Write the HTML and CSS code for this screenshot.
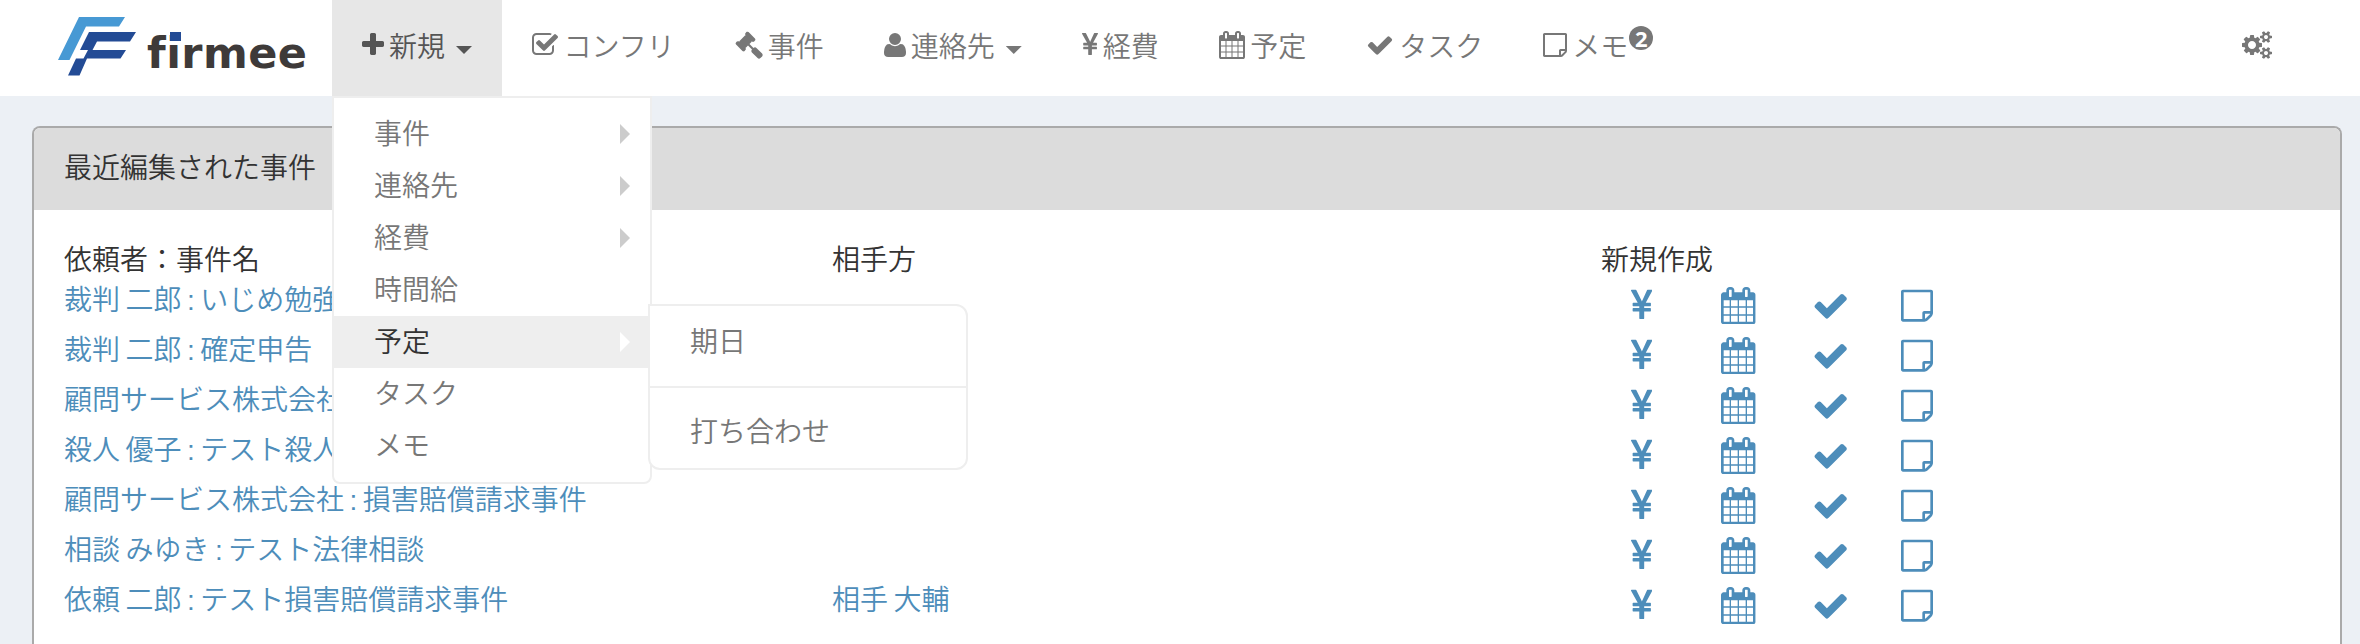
FILE: index.html
```html
<!DOCTYPE html>
<html lang="ja">
<head>
<meta charset="utf-8">
<title>firmee</title>
<link rel="stylesheet" href="styles.css">
</head>
<body>
<svg class="sprite" aria-hidden="true">
  <symbol id="plus" viewBox="192 0 1408 1792"><path d="M1600 736v192q0 40-28 68t-68 28h-416v416q0 40-28 68t-68 28h-192q-40 0-68-28t-28-68v-416h-416q-40 0-68-28t-28-68v-192q0-40 28-68t68-28h416v-416q0-40 28-68t68-28h192q40 0 68 28t28 68v416h416q40 0 68 28t28 68z"/></symbol>
  <symbol id="check-square" viewBox="64 0 1664 1792"><path d="M1472 930v318q0 119-84.5 203.5t-203.5 84.5h-832q-119 0-203.5-84.5t-84.5-203.5v-832q0-119 84.5-203.5t203.5-84.5h832q63 0 117 25 15 7 18 23 3 17-9 29l-49 49q-10 10-23 10-3 0-9-2-23-6-45-6h-832q-66 0-113 47t-47 113v832q0 66 47 113t113 47h832q66 0 113-47t47-113v-254q0-13 9-22l64-64q10-10 23-10 6 0 12 3 20 8 20 29zm231-489l-814 814q-24 24-57 24t-57-24l-430-430q-24-24-24-57t24-57l110-110q24-24 57-24t57 24l263 263 647-647q24-24 57-24t57 24l110 110q24 24 24 57t-24 57z"/></symbol>
  <symbol id="gavel" viewBox="0 0 1792 1792"><path d="M1771 1536q0 53-37 90l-107 108q-39 37-91 37-53 0-90-37l-363-364q-38-36-38-90 0-53 43-96l-256-256-126 126q-14 14-34 14t-34-14q2 2 12.5 12t12.5 13 10 11.5 10 13.5 6 13.5 5.5 16.5 1.5 18q0 38-28 68-3 3-16.5 18t-19 20.5-18.5 16.5-22 15.5-22 9-26 4.5q-40 0-68-28l-408-408q-28-28-28-68 0-13 4.5-26t9-22 15.5-22 16.5-18.5 20.5-19 18-16.5q30-28 68-28 10 0 18 1.5t16.5 5.5 13.5 6 13.5 10 11.5 10 13 12.5 12 12.5q-14-14-14-34t14-34l348-348q14-14 34-14t34 14q-2-2-12.5-12t-12.5-13-10-11.5-10-13.5-6-13.5-5.5-16.5-1.5-18q0-38 28-68 3-3 16.5-18t19-20.5 18.5-16.5 22-15.5 22-9 26-4.5q40 0 68 28l408 408q28 28 28 68 0 13-4.5 26t-9 22-15.5 22-16.5 18.5-20.5 19-18 16.5q-30 28-68 28-10 0-18-1.5t-16.5-5.5-13.5-6-13.5-10-11.5-10-13-12.5-12-12.5q14 14 14 34t-14 34l-126 126 256 256q43-43 96-43 52 0 91 37l363 363q37 39 37 91z"/></symbol>
  <symbol id="user" viewBox="192 0 1408 1792"><path d="M1600 1405q0 120-73 189.5t-194 69.5h-874q-121 0-194-69.5t-73-189.5q0-53 3.5-103.5t14-109 26.5-108.5 43-97.5 62-81 85.5-53.5 111.5-20q9 0 42 21.5t74.5 48 108 48 133.5 21.5 133.5-21.5 108-48 74.5-48 42-21.5q61 0 111.5 20t85.5 53.5 62 81 43 97.5 26.5 108.5 14 109 3.5 103.5zm-320-893q0 159-112.5 271.5t-271.5 112.5-271.5-112.5-112.5-271.5 112.5-271.5 271.5-112.5 271.5 112.5 112.5 271.5z"/></symbol>
  <symbol id="yen" viewBox="384 0 1024 1792"><path d="M985.5 1536h-172q-13 0-22.5-9t-9.5-23v-330h-288q-13 0-22.5-9t-9.5-23v-103q0-13 9.5-22.5t22.5-9.5h288v-85h-288q-13 0-22.5-9t-9.5-23v-104q0-13 9.5-22.5t22.5-9.5h214l-321-578q-8-16 0-32 10-16 28-16h194q19 0 29 18l215 425q19 38 56 125 10-24 30.5-68t27.5-61l191-420q8-19 29-19h191q17 0 27 16 9 14 1 31l-313 579h215q13 0 22.5 9.5t9.5 22.5v104q0 14-9.5 23t-22.5 9h-290v85h290q13 0 22.5 9.5t9.5 22.5v103q0 14-9.5 23t-22.5 9h-290v330q0 13-9.5 22.5t-22.5 9.5z"/></symbol>
  <symbol id="calendar" viewBox="64 0 1664 1792"><path d="M192 1664h288v-288h-288v288zm352 0h320v-288h-320v288zm-352-352h288v-320h-288v320zm352 0h320v-320h-320v320zm-352-384h288v-288h-288v288zm736 736h320v-288h-320v288zm-384-736h320v-288h-320v288zm768 736h288v-288h-288v288zm-384-352h320v-320h-320v320zm-352-864v-288q0-13-9.5-22.5t-22.5-9.5h-64q-13 0-22.5 9.5t-9.5 22.5v288q0 13 9.5 22.5t22.5 9.5h64q13 0 22.5-9.5t9.5-22.5zm736 864h288v-320h-288v320zm-384-384h320v-288h-320v288zm384 0h288v-288h-288v288zm32-480v-288q0-13-9.5-22.5t-22.5-9.5h-64q-13 0-22.5 9.5t-9.5 22.5v288q0 13 9.5 22.5t22.5 9.5h64q13 0 22.5-9.5t9.5-22.5zm384-64v1280q0 52-38 90t-90 38h-1408q-52 0-90-38t-38-90v-1280q0-52 38-90t90-38h128v-96q0-66 47-113t113-47h64q66 0 113 47t47 113v96h384v-96q0-66 47-113t113-47h64q66 0 113 47t47 113v96h128q52 0 90 38t38 90z"/></symbol>
  <symbol id="check" viewBox="0 0 1792 1792"><path d="M1671 566q0 40-28 68l-724 724-136 136q-28 28-68 28t-68-28l-136-136-362-362q-28-28-28-68t28-68l136-136q28-28 68-28t68 28l294 295 656-657q28-28 68-28t68 28l136 136q28 28 28 68z"/></symbol>
  <symbol id="note" viewBox="0 0 1536 1792"><path d="M1400 1280h-248v248q29-10 41-22l185-185q12-12 22-41zm-280-128h288v-896h-1280v1280h896v-288q0-40 28-68t68-28zm416-928v1024q0 40-20 88t-48 76l-184 184q-28 28-76 48t-88 20h-1024q-40 0-68-28t-28-68v-1344q0-40 28-68t68-28h1344q40 0 68 28t28 68z"/></symbol>
  <symbol id="cogs" viewBox="0 0 1920 1792"><path d="M896 896q0-106-75-181t-181-75-181 75-75 181 75 181 181 75 181-75 75-181zm768 512q0-52-38-90t-90-38-90 38-38 90q0 53 37.5 90.5t90.5 37.5 90.5-37.5 37.5-90.5zm0-1024q0-52-38-90t-90-38-90 38-38 90q0 53 37.5 90.5t90.5 37.5 90.5-37.5 37.5-90.5zm-384 421v185q0 10-7 19.5t-16 10.5l-155 24q-11 35-32 76 34 48 90 115 7 11 7 20 0 12-7 19-23 30-82.5 89.5t-78.5 59.5q-11 0-21-7l-115-90q-37 19-77 31-11 108-23 155-7 24-30 24h-186q-11 0-20-7.5t-10-17.5l-23-153q-34-10-75-31l-118 89q-7 7-20 7-11 0-21-8-144-133-144-160 0-9 7-19 10-14 41-53t47-61q-23-44-35-82l-152-24q-10-1-17-9.5t-7-19.5v-185q0-10 7-19.5t16-10.5l155-24q11-35 32-76-34-48-90-115-7-11-7-20 0-12 7-20 22-30 82-89t79-59q11 0 21 7l115 90q34-18 77-32 11-108 23-154 7-24 30-24h186q11 0 20 7.5t10 17.5l23 153q34 10 75 31l118-89q8-7 20-7 11 0 21 8 144 133 144 160 0 8-7 19-12 16-42 54t-45 60q23 48 34 82l152 23q10 2 17 10.5t7 19.5zm640 533v140q0 16-149 31-12 27-30 52 51 113 51 138 0 4-4 7-122 71-124 71-8 0-46-47t-52-68q-20 2-30 2t-30-2q-14 21-52 68t-46 47q-2 0-124-71-4-3-4-7 0-25 51-138-18-25-30-52-149-15-149-31v-140q0-16 149-31 13-29 30-52-51-113-51-138 0-4 4-7 4-2 35-20t59-34 30-16q8 0 46 46.5t52 67.5q20-2 30-2t30 2q51-71 92-112l6-2q4 0 124 70 4 3 4 7 0 25-51 138 17 23 30 52 149 15 149 31zm0-1024v140q0 16-149 31-12 27-30 52 51 113 51 138 0 4-4 7-122 71-124 71-8 0-46-47t-52-68q-20 2-30 2t-30-2q-14 21-52 68t-46 47q-2 0-124-71-4-3-4-7 0-25 51-138-18-25-30-52-149-15-149-31v-140q0-16 149-31 13-29 30-52-51-113-51-138 0-4 4-7 4-2 35-20t59-34 30-16q8 0 46 46.5t52 67.5q20-2 30-2t30 2q51-71 92-112l6-2q4 0 124 70 4 3 4 7 0 25-51 138 17 23 30 52 149 15 149 31z"/></symbol>
</svg>

<nav class="navbar">
  <a class="brand" aria-label="firmee">
    <svg class="logo" width="276" height="96" viewBox="0 0 276 96">
      <path fill="#4799d4" d="M79 17h46l-6 9.500H86L69.500 60H58z"/>
      <path fill="#234b95" d="M89 32h47l-6 9.500H97l-4.500 8.500H126l-5.500 8.500H87L79.500 75.500H68l8-17h7.500l4.500-8.500h-8z"/>
      <text class="logo-text" x="147" y="67.500" textLength="160">firmee</text>
      <rect fill="#234b95" x="170" y="32" width="11" height="9"/>
    </svg>
  </a>
  <ul class="nav">
    <li class="nav-item open">
      <svg class="icon"><use href="#plus"/></svg><span>新規</span><i class="caret"></i>
      <ul class="menu">
        <li class="more">事件</li>
        <li class="more">連絡先</li>
        <li class="more">経費</li>
        <li>時間給</li>
        <li class="more active">予定
          <ul class="submenu">
            <li>期日</li>
            <li class="divider"></li>
            <li>打ち合わせ</li>
          </ul>
        </li>
        <li>タスク</li>
        <li>メモ</li>
      </ul>
    </li>
    <li class="nav-item"><svg class="icon w26"><use href="#check-square"/></svg><span>コンフリ</span></li>
    <li class="nav-item"><svg class="icon w28"><use href="#gavel"/></svg><span>事件</span></li>
    <li class="nav-item"><svg class="icon"><use href="#user"/></svg><span>連絡先</span><i class="caret"></i></li>
    <li class="nav-item"><svg class="icon w16"><use href="#yen"/></svg><span>経費</span></li>
    <li class="nav-item"><svg class="icon w26"><use href="#calendar"/></svg><span>予定</span></li>
    <li class="nav-item"><svg class="icon w28"><use href="#check"/></svg><span>タスク</span></li>
    <li class="nav-item"><svg class="icon w24"><use href="#note"/></svg><span>メモ</span><b class="badge">2</b></li>
  </ul>
  <a class="settings"><svg class="icon w30"><use href="#cogs"/></svg></a>
</nav>

<main class="panel">
  <h1 class="panel-title">最近編集された事件</h1>
  <div class="cases">
    <div class="row head"><span>依頼者：事件名</span><span>相手方</span><span>新規作成</span></div>
    <div class="row"><a>裁判 二郎 : いじめ勉強</a><a></a><div class="actions"><svg class="a-yen"><use href="#yen"/></svg><svg class="a-cal"><use href="#calendar"/></svg><svg class="a-check"><use href="#check"/></svg><svg class="a-note"><use href="#note"/></svg></div></div>
    <div class="row"><a>裁判 二郎 : 確定申告</a><a></a><div class="actions"><svg class="a-yen"><use href="#yen"/></svg><svg class="a-cal"><use href="#calendar"/></svg><svg class="a-check"><use href="#check"/></svg><svg class="a-note"><use href="#note"/></svg></div></div>
    <div class="row"><a>顧問サービス株式会社</a><a></a><div class="actions"><svg class="a-yen"><use href="#yen"/></svg><svg class="a-cal"><use href="#calendar"/></svg><svg class="a-check"><use href="#check"/></svg><svg class="a-note"><use href="#note"/></svg></div></div>
    <div class="row"><a>殺人 優子 : テスト殺人</a><a></a><div class="actions"><svg class="a-yen"><use href="#yen"/></svg><svg class="a-cal"><use href="#calendar"/></svg><svg class="a-check"><use href="#check"/></svg><svg class="a-note"><use href="#note"/></svg></div></div>
    <div class="row"><a>顧問サービス株式会社 : 損害賠償請求事件</a><a></a><div class="actions"><svg class="a-yen"><use href="#yen"/></svg><svg class="a-cal"><use href="#calendar"/></svg><svg class="a-check"><use href="#check"/></svg><svg class="a-note"><use href="#note"/></svg></div></div>
    <div class="row"><a>相談 みゆき : テスト法律相談</a><a></a><div class="actions"><svg class="a-yen"><use href="#yen"/></svg><svg class="a-cal"><use href="#calendar"/></svg><svg class="a-check"><use href="#check"/></svg><svg class="a-note"><use href="#note"/></svg></div></div>
    <div class="row"><a>依頼 二郎 : テスト損害賠償請求事件</a><a>相手 大輔</a><div class="actions"><svg class="a-yen"><use href="#yen"/></svg><svg class="a-cal"><use href="#calendar"/></svg><svg class="a-check"><use href="#check"/></svg><svg class="a-note"><use href="#note"/></svg></div></div>
  </div>
</main>
</body>
</html>
```
FILE: styles.css
```css
* { box-sizing: border-box; }
html, body { height: 100%; }
body {
  display: flex;
  flex-direction: column;
  margin: 0;
  background: #ecf0f5;
  color: #333;
  font: 350 28px/40px "Liberation Sans", "Noto Sans CJK JP", sans-serif;
}
ul { margin: 0; padding: 0; list-style: none; }
svg { display: block; fill: currentColor; flex: none; }
.sprite { position: absolute; width: 0; height: 0; }

.navbar { display: flex; height: 96px; background: #fff; color: #777; }
.brand { width: 332px; }
.logo { overflow: visible; }
.logo-text {
  font: bold 43px "DejaVu Sans", sans-serif;
  font-variant-ligatures: none;
  fill: #3e3a39;
}
.nav { display: flex; flex: 1; }
.nav-item {
  position: relative;
  display: flex;
  height: 96px;
  padding: 28px 30px 0;
  white-space: nowrap;
}
.nav-item.open { background: #e7e7e7; color: #555; }
.icon { width: 22px; height: 28px; margin: 3px 5px 0 0; }
.w16 { width: 16px; }
.w24 { width: 24px; }
.w26 { width: 26px; margin-right: 5.500px; }
.w28 { width: 28px; }
.w30 { width: 30px; margin-right: 0; }
.caret {
  width: 16px;
  height: 8px;
  margin: 18px 0 0 11px;
  background: currentColor;
  clip-path: polygon(0 0, 100% 0, 50% 100%);
}
.badge {
  width: 24px;
  height: 24px;
  margin: -2px 0 0 1px;
  border-radius: 12px;
  background: #777;
  color: #fff;
  font: bold 22px/24px "Noto Sans", sans-serif;
  text-align: center;
}
.settings { padding: 28px 88px 0 0; }

/* Dropdown and its nested flyout */
.menu, .submenu {
  position: absolute;
  width: 320px;
  padding: 10px 0;
  border: 2px solid #eee;
  background: #fff;
}
.menu { top: 96px; left: 0; z-index: 10; border-radius: 0 0 8px 8px; color: #777; }
.menu li { position: relative; height: 52px; padding: 7px 40px 0; }
.menu .active { background: #eee; color: #333; }
.more::after {
  content: "";
  position: absolute;
  top: 16px;
  right: 20px;
  width: 10px;
  height: 20px;
  background: #ccc;
  clip-path: polygon(0 0, 100% 50%, 0 100%);
}
.more.active::after { background: #fff; }
.submenu { top: -12px; left: 314px; border-radius: 0 12px 12px 12px; color: #777; }
.menu .divider { height: 2px; margin: 18px 0; padding: 0; background: #eee; }

.panel {
  flex: 1;
  margin: 30px 18px 0 32px;
  border: 2px solid #aaa;
  border-bottom: 0;
  border-radius: 8px 8px 0 0;
  background: #fff;
}
.panel-title {
  height: 82px;
  margin: 0;
  padding: 21px 30px 0;
  border-radius: 6px 6px 0 0;
  background: #dcdcdc;
  font: inherit;
}
.cases { padding: 31px 30px 0; }
.row { display: grid; grid-template-columns: 768px 769px 1fr; height: 50px; white-space: nowrap; word-spacing: -2.300px; }
.row.head { height: 40px; }
.row a, .actions { color: #4d8dba; }
.actions { display: flex; padding: 5.500px 0 0 30px; }
.actions svg { height: 37.330px; }
.actions .a-yen { width: 21.330px; margin-right: 69px; }
.actions .a-cal { width: 34.670px; margin-right: 56px; }
.actions .a-check { width: 37.330px; margin-right: 52px; }
.actions .a-note { width: 32px; }
```
